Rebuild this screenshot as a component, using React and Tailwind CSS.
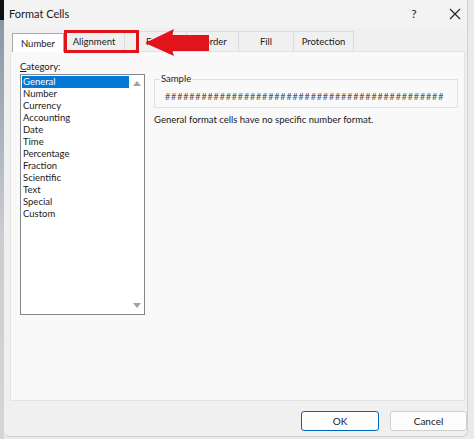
import React from 'react'

const categories = [
  'General',
  'Number',
  'Currency',
  'Accounting',
  'Date',
  'Time',
  'Percentage',
  'Fraction',
  'Scientific',
  'Text',
  'Special',
  'Custom',
]

const tabs = [
  { label: 'Number', w: 'w-[52px]', active: true },
  { label: 'Alignment', w: 'w-[61px]' },
  { label: 'Font', w: 'w-[62px]' },
  { label: 'Border', w: 'w-[52px]' },
  { label: 'Fill', w: 'w-[55px]' },
  { label: 'Protection', w: 'w-[60px]' },
]

function Tab({ label, w, active }) {
  if (active) {
    return (
      <div
        className={`${w} h-[19px] mb-[-1px] pt-[2px] flex items-center justify-center bg-white border border-[#a9a9a9] border-b-0 z-10`}
      >
        {label}
      </div>
    )
  }
  return (
    <div
      className={`${w} h-[20px] pt-[2px] flex items-center justify-center bg-[#f0f0f0] border-t border-r border-[#dcdcdc]`}
    >
      {label}
    </div>
  )
}

function Triangle({ up }) {
  return (
    <svg width="8" height="6" viewBox="0 0 8 6">
      <path d={up ? 'M0 6 L4 1 L8 6 Z' : 'M0 0 L4 5 L8 0 Z'} fill="#a3a3a3" />
    </svg>
  )
}

export default function App() {
  return (
    <div
      className="relative w-[474px] h-[439px] flex bg-[#eaeaea] overflow-hidden text-[#1a1a1a]"
      style={{ fontFamily: 'Lato, "Noto Sans", Arial, sans-serif' }}
    >
      <div className="w-[4px] h-full flex flex-col">
        <div className="h-[20px] bg-[#111]" />
        <div className="flex-1 bg-gradient-to-b from-[#8a96a6] via-[#c9ccd0] to-[#d6d6d6]" />
      </div>

      <div className="w-[464px] h-[437px] flex flex-col bg-[#f0f0f0] border-r border-b border-[#cfcfcf] rounded-b-[6px]">
        {/* title bar */}
        <div className="h-[28px] flex items-center bg-[#f3f3f3] pl-[5px] pr-[6px] text-[11px]">
          <span className="flex-1">Format Cells</span>
          <span className="w-[20px] text-center text-[12px] mr-[25px]">?</span>
          <svg width="12" height="12" viewBox="0 0 12 12">
            <path d="M1 1 L11 11 M11 1 L1 11" stroke="#222" strokeWidth="1.1" />
          </svg>
        </div>

        {/* tabs */}
        <div className="mt-[3px] pl-[8px] flex items-end text-[9.5px]">
          {tabs.map((t) => (
            <Tab key={t.label} {...t} />
          ))}
        </div>

        {/* panel */}
        <div className="ml-[6px] w-[455px] h-[350px] bg-[#f9f9f9] border border-[#e3e3e3] flex pt-[8px] pl-[9px] text-[9.5px]">
          <div className="flex flex-col w-[125px]">
            <span className="h-[14px] leading-[14px]">
              <span className="underline">C</span>ategory:
            </span>
            <div className="h-[241px] bg-white border border-[#828790] flex">
              <div className="flex-1 pt-[1px] pl-[1px]">
                {categories.map((c, i) => (
                  <div
                    key={c}
                    className={`h-[12px] leading-[12px] pl-[1px] ${
                      i === 0 ? 'bg-[#0078d7] text-white' : ''
                    }`}
                  >
                    {c}
                  </div>
                ))}
              </div>
              <div className="w-[15px] flex flex-col justify-between items-center py-[5px]">
                <Triangle up />
                <Triangle />
              </div>
            </div>
          </div>

          <div className="ml-[9px] flex flex-col w-[304px]">
            <div className="mt-[19px] relative h-[29px] border border-[#e1e1e1]">
              <span className="absolute left-[5px] top-[-8px] px-[1px] bg-[#f9f9f9] leading-[14px]">
                Sample
              </span>
              <div className="pt-[11px] pl-[10px] text-[9px] leading-[12px] text-[#555] tracking-[0.85px]">
                {'#'.repeat(46)}
              </div>
            </div>
            <div className="mt-[5px] leading-[14px]">
              General format cells have no specific number format.
            </div>
          </div>
        </div>

        {/* footer */}
        <div className="flex justify-end gap-[11px] mt-[10px] text-[10px]">
          <button className="w-[78px] h-[20px] rounded-[3px] bg-[#fdfdfd] border border-[#0067c0]">
            OK
          </button>
          <button className="w-[77px] h-[20px] rounded-[3px] bg-[#fdfdfd] border border-[#d0d0d0]">
            Cancel
          </button>
        </div>
      </div>

      {/* annotation overlays */}
      <div className="absolute left-[64px] top-[30px] w-[75px] h-[23px] border-[3px] border-[#e1141c]" />
      <svg
        className="absolute left-[143px] top-[27px]"
        width="70"
        height="30"
        viewBox="0 0 70 30"
      >
        <path
          d="M2 16 L31 2 Q29 8 30 8 L66 8 L66 24 L30 24 Q29 24 31 29 Z"
          fill="#e1141c"
        />
      </svg>
    </div>
  )
}
